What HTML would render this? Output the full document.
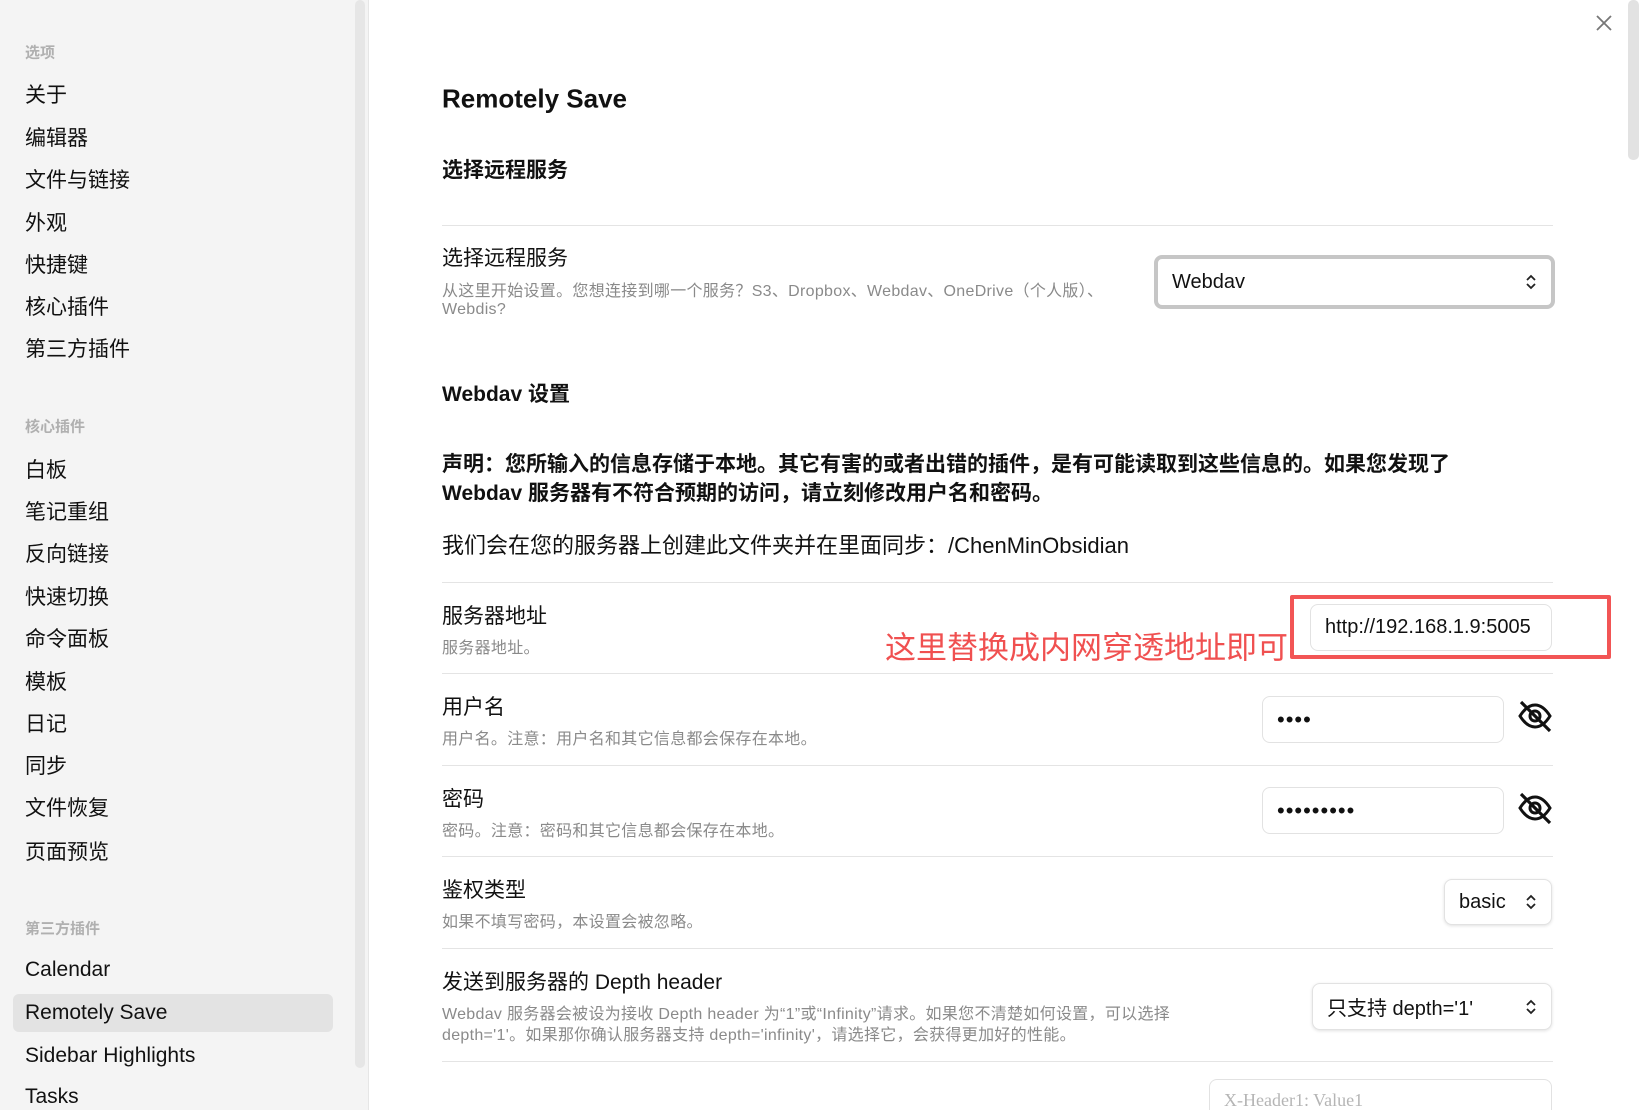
<!DOCTYPE html>
<html style="width:1639px;height:1110px;overflow:hidden"><head><meta charset="utf-8"><style>
*{margin:0;padding:0;box-sizing:border-box}
body{width:1639px;height:1110px;overflow:hidden;background:#fff;font-family:"Liberation Sans","Noto Sans CJK SC",sans-serif;color:#111;position:relative}
.a{position:absolute;white-space:nowrap;line-height:1}
#side{position:absolute;left:0;top:0;width:369px;height:1110px;background:#f4f4f4;border-right:1px solid #e6e6e6}
.sh{position:absolute;left:25px;font-size:15px;font-weight:bold;color:#b0b0b0;transform:translateY(-50%)}
.si{position:absolute;left:25px;font-size:21px;color:#111;transform:translateY(-50%)}
.lbl{position:absolute;left:442px;font-size:21px;transform:translateY(-50%)}
.desc{position:absolute;left:442px;font-size:16px;color:#8a8a8a;transform:translateY(-50%);letter-spacing:0.3px}
.hr{position:absolute;left:442px;width:1111px;height:1px;background:#e4e4e4}
.inp{position:absolute;border:1px solid #e2e2e2;border-radius:8px;background:#fff;font-size:20px;display:flex;align-items:center;padding-left:14px}
.sel{position:absolute;border:1px solid #e2e2e2;border-radius:8px;background:#fff;font-size:20px;display:flex;align-items:center;padding-left:14px;box-shadow:0 1px 3px rgba(0,0,0,.12)}
.sel svg{position:absolute;right:14px;top:50%;margin-top:-8px}
</style></head><body>
<div id="side">
<div style="position:absolute;left:355px;top:0;width:10px;height:1068px;background:#e6e6e6;border-radius:5px"></div>
<div class="sh" style="top:52px">选项</div>
<div class="si" style="top:94px">关于</div>
<div class="si" style="top:137px">编辑器</div>
<div class="si" style="top:179px">文件与链接</div>
<div class="si" style="top:222px">外观</div>
<div class="si" style="top:264px">快捷键</div>
<div class="si" style="top:306px">核心插件</div>
<div class="si" style="top:348px">第三方插件</div>
<div class="sh" style="top:426px">核心插件</div>
<div class="si" style="top:469px">白板</div>
<div class="si" style="top:511px">笔记重组</div>
<div class="si" style="top:553px">反向链接</div>
<div class="si" style="top:596px">快速切换</div>
<div class="si" style="top:638px">命令面板</div>
<div class="si" style="top:681px">模板</div>
<div class="si" style="top:723px">日记</div>
<div class="si" style="top:765px">同步</div>
<div class="si" style="top:807px">文件恢复</div>
<div class="si" style="top:851px">页面预览</div>
<div class="sh" style="top:928px">第三方插件</div>
<div class="si" style="top:970px">Calendar</div>
<div style="position:absolute;left:13px;top:994px;width:320px;height:38px;background:#e3e3e3;border-radius:6px"></div>
<div class="si" style="top:1013px">Remotely Save</div>
<div class="si" style="top:1056px">Sidebar Highlights</div>
<div class="si" style="top:1097px">Tasks</div>
</div>

<svg class="a" style="left:1595px;top:14px" width="18" height="18" viewBox="0 0 18 18"><path d="M2 2L16 16M16 2L2 16" stroke="#777" stroke-width="1.8"/></svg>
<div style="position:absolute;left:1628px;top:0;width:11px;height:160px;background:#e2e2e2;border-radius:5px"></div>

<div class="lbl" style="top:99px;font-size:26px;font-weight:bold">Remotely Save</div>
<div class="lbl" style="top:169px;font-weight:bold">选择远程服务</div>
<div class="hr" style="top:225px"></div>
<div class="lbl" style="top:257px">选择远程服务</div>
<div class="desc" style="top:289px">从这里开始设置。您想连接到哪一个服务？S3、Dropbox、Webdav、OneDrive（个人版）、</div>
<div class="desc" style="top:310px">Webdis?</div>
<div class="sel" style="left:1154px;top:255px;width:401px;height:54px;border:4px solid #c6c6c6;box-shadow:none;padding-left:14px">Webdav<svg width="12" height="16" viewBox="0 0 12 16"><path d="M2 6L6 2L10 6M2 10L6 14L10 10" stroke="#222" stroke-width="1.8" fill="none"/></svg></div>

<div class="lbl" style="top:393px;font-weight:bold">Webdav 设置</div>
<div class="lbl" style="top:463px;font-weight:bold">声明：您所输入的信息存储于本地。其它有害的或者出错的插件，是有可能读取到这些信息的。如果您发现了</div>
<div class="lbl" style="top:492px;font-weight:bold">Webdav 服务器有不符合预期的访问，请立刻修改用户名和密码。</div>
<div class="lbl" style="top:544px;font-size:22px">我们会在您的服务器上创建此文件夹并在里面同步：/ChenMinObsidian</div>
<div class="hr" style="top:582px"></div>

<div class="lbl" style="top:615px">服务器地址</div>
<div class="desc" style="top:646px">服务器地址。</div>
<div class="a" style="left:885px;top:648px;transform:translateY(-50%);font-size:31px;color:#f05050">这里替换成内网穿透地址即可</div>
<div style="position:absolute;left:1290px;top:595px;width:321px;height:64px;border:4px solid #f25555;border-radius:2px"></div>
<div class="inp" style="left:1310px;top:604px;width:242px;height:47px">http://192.168.1.9:5005</div>
<div class="hr" style="top:673px"></div>

<div class="lbl" style="top:706px">用户名</div>
<div class="desc" style="top:737px">用户名。注意：用户名和其它信息都会保存在本地。</div>
<div class="inp" style="left:1262px;top:696px;width:242px;height:47px;font-size:22px;letter-spacing:1px">••••</div>
<svg class="a" style="left:1517px;top:699px" width="36" height="34" viewBox="0 0 36 34"><path d="M3 17C8 9 13 6 18 6C23 6 28 9 33 17C28 25 23 28 18 28C13 28 8 25 3 17Z" stroke="#111" stroke-width="3" fill="none"/><circle cx="18" cy="17" r="5" stroke="#111" stroke-width="3" fill="none"/><path d="M4 3L33 32" stroke="#111" stroke-width="3.2"/></svg>
<div class="hr" style="top:765px"></div>

<div class="lbl" style="top:798px">密码</div>
<div class="desc" style="top:829px">密码。注意：密码和其它信息都会保存在本地。</div>
<div class="inp" style="left:1262px;top:787px;width:242px;height:47px;font-size:22px;letter-spacing:1px">•••••••••</div>
<svg class="a" style="left:1517px;top:791px" width="36" height="34" viewBox="0 0 36 34"><path d="M3 17C8 9 13 6 18 6C23 6 28 9 33 17C28 25 23 28 18 28C13 28 8 25 3 17Z" stroke="#111" stroke-width="3" fill="none"/><circle cx="18" cy="17" r="5" stroke="#111" stroke-width="3" fill="none"/><path d="M4 3L33 32" stroke="#111" stroke-width="3.2"/></svg>
<div class="hr" style="top:856px"></div>

<div class="lbl" style="top:889px">鉴权类型</div>
<div class="desc" style="top:920px">如果不填写密码，本设置会被忽略。</div>
<div class="sel" style="left:1444px;top:879px;width:108px;height:46px">basic<svg width="12" height="16" viewBox="0 0 12 16"><path d="M2 6L6 2L10 6M2 10L6 14L10 10" stroke="#222" stroke-width="1.8" fill="none"/></svg></div>
<div class="hr" style="top:948px"></div>

<div class="lbl" style="top:981px">发送到服务器的 Depth header</div>
<div class="desc" style="top:1012px">Webdav 服务器会被设为接收 Depth header 为“1”或“Infinity”请求。如果您不清楚如何设置，可以选择</div>
<div class="desc" style="top:1033px">depth='1'。如果那你确认服务器支持 depth='infinity'，请选择它，会获得更加好的性能。</div>
<div class="sel" style="left:1312px;top:983px;width:240px;height:47px">只支持 depth='1'<svg width="12" height="16" viewBox="0 0 12 16"><path d="M2 6L6 2L10 6M2 10L6 14L10 10" stroke="#222" stroke-width="1.8" fill="none"/></svg></div>
<div class="hr" style="top:1061px"></div>

<div class="inp" style="left:1209px;top:1079px;width:343px;height:31px;border-bottom:none;border-radius:8px 8px 0 0;align-items:flex-start;padding-top:10px;font-family:'Liberation Serif',serif;font-size:18px;color:#b5b5b5">X-Header1: Value1</div>
</body></html>
